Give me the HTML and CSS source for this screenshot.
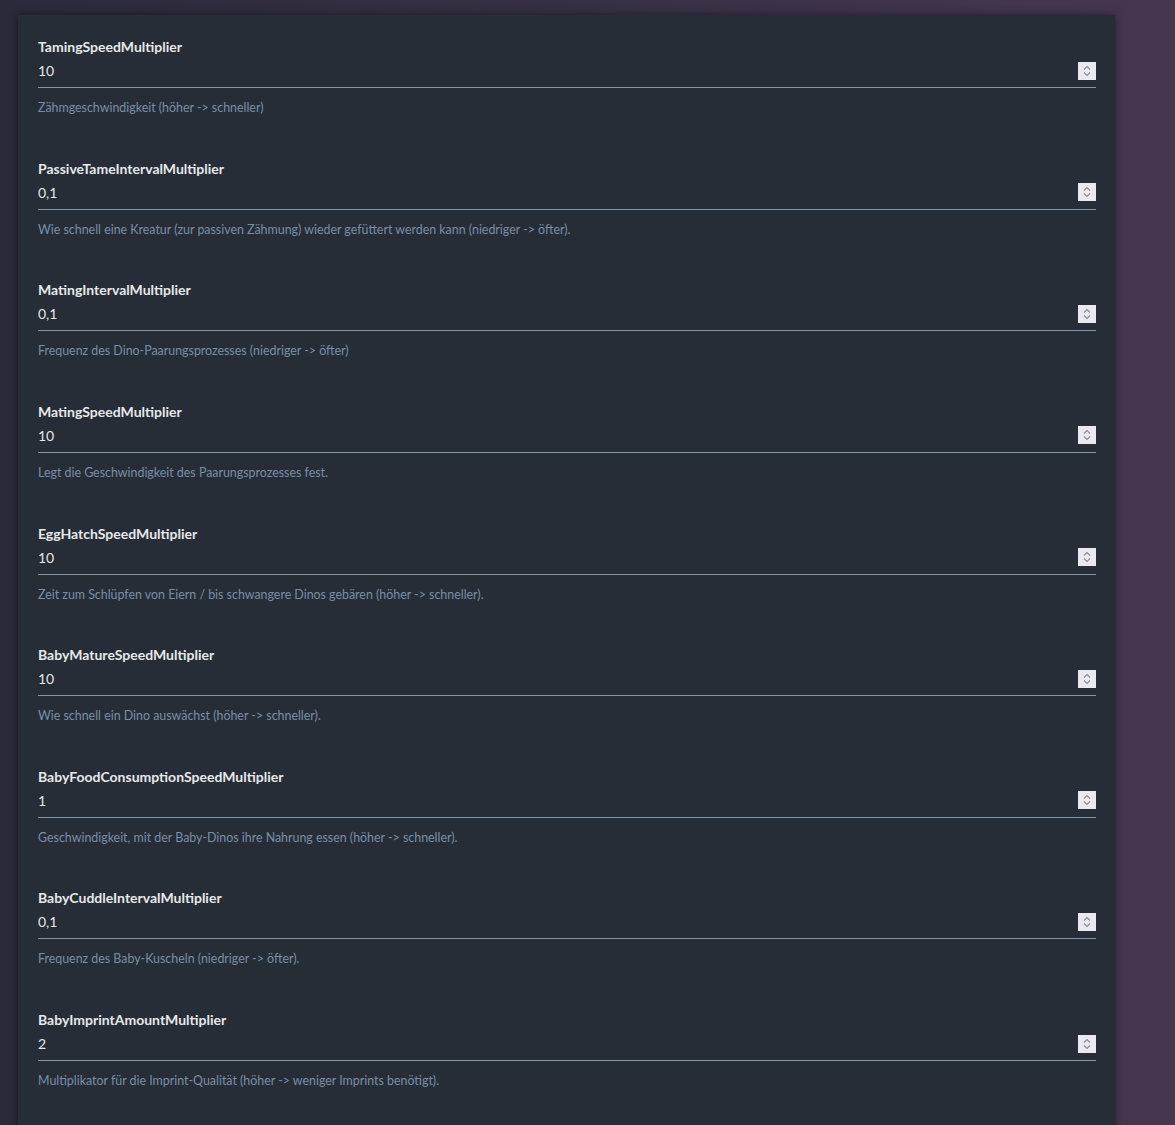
FILE: index.html
```html
<!DOCTYPE html>
<html lang="de">
<head>
  <meta charset="UTF-8" />
  <meta name="viewport" content="width=device-width, initial-scale=1.0"/>
  <title>Dino-Einstellungen</title>
  <link rel="stylesheet" href="styles.css">
</head>
<body>
  <div class="panel">

    <div class="field">
      <label>TamingSpeedMultiplier</label>
      <div class="num-input">
        <span class="value">10</span>
        <span class="spin"><svg viewBox="0 0 18 18"><path d="M6 7.5 9 4.5 12 7.5M6 10.5 9 13.5 12 10.5"/></svg></span>
      </div>
      <p class="hint">Zähmgeschwindigkeit (höher -&gt; schneller)</p>
    </div>

    <div class="field">
      <label>PassiveTameIntervalMultiplier</label>
      <div class="num-input">
        <span class="value">0,1</span>
        <span class="spin"><svg viewBox="0 0 18 18"><path d="M6 7.5 9 4.5 12 7.5M6 10.5 9 13.5 12 10.5"/></svg></span>
      </div>
      <p class="hint">Wie schnell eine Kreatur (zur passiven Zähmung) wieder gefüttert werden kann (niedriger -&gt; öfter).</p>
    </div>

    <div class="field">
      <label>MatingIntervalMultiplier</label>
      <div class="num-input">
        <span class="value">0,1</span>
        <span class="spin"><svg viewBox="0 0 18 18"><path d="M6 7.5 9 4.5 12 7.5M6 10.5 9 13.5 12 10.5"/></svg></span>
      </div>
      <p class="hint">Frequenz des Dino-Paarungsprozesses (niedriger -&gt; öfter)</p>
    </div>

    <div class="field">
      <label>MatingSpeedMultiplier</label>
      <div class="num-input">
        <span class="value">10</span>
        <span class="spin"><svg viewBox="0 0 18 18"><path d="M6 7.5 9 4.5 12 7.5M6 10.5 9 13.5 12 10.5"/></svg></span>
      </div>
      <p class="hint">Legt die Geschwindigkeit des Paarungsprozesses fest.</p>
    </div>

    <div class="field">
      <label>EggHatchSpeedMultiplier</label>
      <div class="num-input">
        <span class="value">10</span>
        <span class="spin"><svg viewBox="0 0 18 18"><path d="M6 7.5 9 4.5 12 7.5M6 10.5 9 13.5 12 10.5"/></svg></span>
      </div>
      <p class="hint">Zeit zum Schlüpfen von Eiern / bis schwangere Dinos gebären (höher -&gt; schneller).</p>
    </div>

    <div class="field">
      <label>BabyMatureSpeedMultiplier</label>
      <div class="num-input">
        <span class="value">10</span>
        <span class="spin"><svg viewBox="0 0 18 18"><path d="M6 7.5 9 4.5 12 7.5M6 10.5 9 13.5 12 10.5"/></svg></span>
      </div>
      <p class="hint">Wie schnell ein Dino auswächst (höher -&gt; schneller).</p>
    </div>

    <div class="field">
      <label>BabyFoodConsumptionSpeedMultiplier</label>
      <div class="num-input">
        <span class="value">1</span>
        <span class="spin"><svg viewBox="0 0 18 18"><path d="M6 7.5 9 4.5 12 7.5M6 10.5 9 13.5 12 10.5"/></svg></span>
      </div>
      <p class="hint">Geschwindigkeit, mit der Baby-Dinos ihre Nahrung essen (höher -&gt; schneller).</p>
    </div>

    <div class="field">
      <label>BabyCuddleIntervalMultiplier</label>
      <div class="num-input">
        <span class="value">0,1</span>
        <span class="spin"><svg viewBox="0 0 18 18"><path d="M6 7.5 9 4.5 12 7.5M6 10.5 9 13.5 12 10.5"/></svg></span>
      </div>
      <p class="hint">Frequenz des Baby-Kuscheln (niedriger -&gt; öfter).</p>
    </div>

    <div class="field">
      <label>BabyImprintAmountMultiplier</label>
      <div class="num-input">
        <span class="value">2</span>
        <span class="spin"><svg viewBox="0 0 18 18"><path d="M6 7.5 9 4.5 12 7.5M6 10.5 9 13.5 12 10.5"/></svg></span>
      </div>
      <p class="hint">Multiplikator für die Imprint-Qualität (höher -&gt; weniger Imprints benötigt).</p>
    </div>

  </div>
</body>
</html>
```

FILE: styles.css
```css
html {
  height: 100%;
}
body {
  font-family: Lato, 'Noto Sans', sans-serif;
  margin: 0;
  padding: 15px 0 0 18px;
  min-height: 100%;
  box-sizing: border-box;
  background: linear-gradient(to right, #2a2a3a 0%, #3a3146 60%, #46374f 100%);
  overflow: hidden;
}
.panel {
  width: 1097px;
  box-sizing: border-box;
  padding: 23px 19px 60px 20px;
  background-color: #262d37;
  box-shadow: 0 0 8px rgba(0, 0, 0, 0.45);
}
.field {
  margin-bottom: 43.625px;
}
label {
  display: block;
  font-weight: bold;
  font-size: 14px;
  line-height: 17px;
  color: #e6e8ea;
  margin-bottom: 5px;
}
.num-input {
  display: flex;
  align-items: center;
  justify-content: space-between;
  height: 28px;
  box-sizing: border-box;
  padding-bottom: 6px;
  border-bottom: 1px solid #8496a8;
}
.value {
  font-size: 14px;
  color: #e4e6e8;
}
.spin {
  width: 18px;
  height: 18px;
  background: #e9e9ef;
}
.spin svg {
  display: block;
  width: 18px;
  height: 18px;
  fill: none;
  stroke: #8c8c94;
  stroke-width: 1.2;
}
.hint {
  margin: 12px 0 0;
  font-size: 12.4px;
  line-height: 16px;
  color: #7b8da6;
}
```
